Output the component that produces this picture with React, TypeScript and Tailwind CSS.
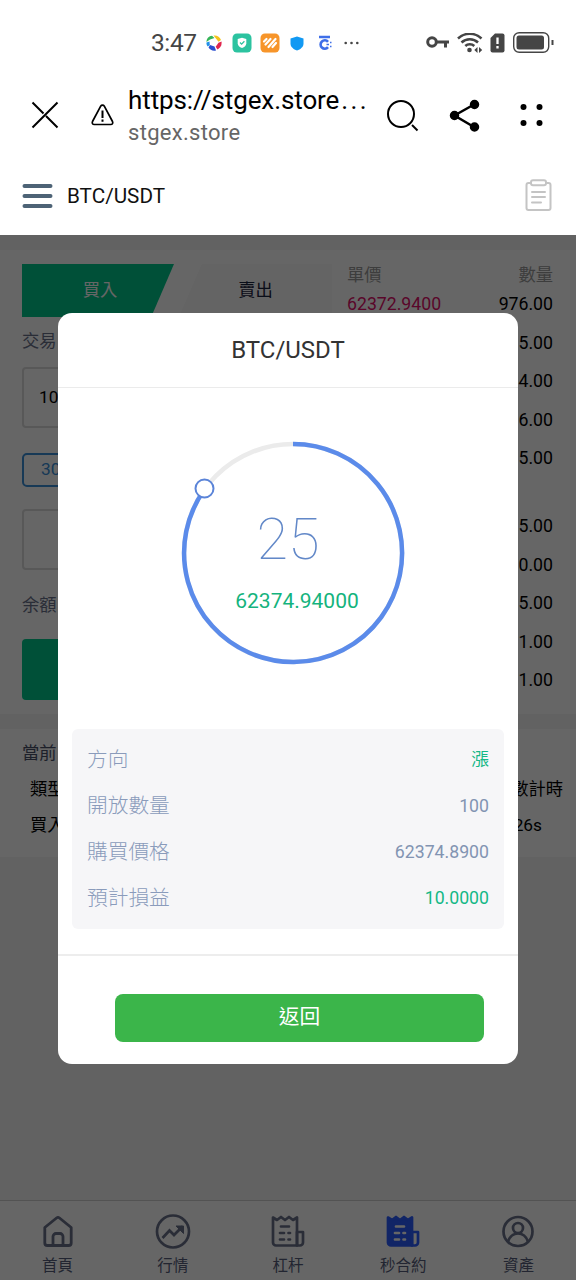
import type { ReactNode } from 'react';

const tradeRows = ['5.00', '4.00', '6.00', '5.00'];
const sellRows = ['5.00', '0.00', '5.00', '1.00', '1.00'];

const details = [
  { label: '方向', value: '漲', up: true },
  { label: '開放數量', value: '100' },
  { label: '購買價格', value: '62374.8900' },
  { label: '預計損益', value: '10.0000', up: true },
];

function StatusBar() {
  return (
    <div className="flex h-[86px] items-center pl-[151px] pr-[22px] text-[#454545]">
      <span className="w-[47px] text-[24.5px] leading-none tracking-[-0.4px]">3:47</span>
      <svg className="ml-[7px]" width="18" height="18" viewBox="0 0 18 18">
        <path d="M1.500 8C1.500 4.500 4 2 7 1.800L9.500 4 5 5.500z" fill="#35b558" />
        <path d="M8.500 1.500c3.500-.5 6.500 1.500 7.500 4.500l-2.500 1.800-3-3.800z" fill="#f6c31c" />
        <path d="M16.500 7.500c.6 3.500-1.200 6.500-4 8l-1.800-2.800 2.800-4z" fill="#e0264f" />
        <path d="M11 16.500c-3.500.8-6-.8-7.500-3L5 11l4.500 1.500z" fill="#2b4fd0" />
        <path d="M2.800 12.500C1.500 11 1.300 9.500 1.500 8.500L4.500 7.500l.3 3.500z" fill="#1f8fe8" />
      </svg>
      <svg className="ml-[9px]" width="20" height="20" viewBox="0 0 20 20">
        <rect x="0.500" y="0.500" width="19" height="19" rx="4.500" fill="#2cc3a0" />
        <path d="M10 4.800l4.300 1.200v4.200c0 2.300-1.800 3.900-4.300 4.800-2.500-.9-4.300-2.500-4.300-4.800V6z" fill="#fff" />
        <path d="M8 9.500l1.600 1.600 2.800-2.800" fill="none" stroke="#2cc3a0" strokeWidth="1.300" />
      </svg>
      <svg className="ml-2" width="20" height="20" viewBox="0 0 20 20" fill="none">
        <rect x="0.500" y="0.500" width="19" height="19" rx="4.500" fill="#f7952a" />
        <path d="M4 8.500l2.500-2.500M5.500 11.500l5-5.500M8.500 14l7-8M12.500 14l3.500-4" stroke="#fff" strokeWidth="2.200" strokeLinecap="round" />
      </svg>
      <svg className="ml-[10px]" width="14" height="15" viewBox="0 0 14 15">
        <path d="M7 .5l6.500 2v5c0 3.500-3 5.800-6.500 7-3.500-1.200-6.500-3.500-6.500-7v-5z" fill="#1299f3" />
      </svg>
      <svg className="ml-[14px]" width="15" height="16" viewBox="0 0 15 16" fill="none" stroke="#3f6fe8">
        <path d="M1 2h11" strokeWidth="2.500" />
        <path d="M10 6.800a4.200 4.200 0 1 0 0 5.400" strokeWidth="2.600" />
        <path d="M8.500 9.500H11M12 7.500h1.500M12 11.500h1.500" strokeWidth="1.500" />
      </svg>
      <svg className="ml-[11px]" width="15" height="4" viewBox="0 0 15 4" fill="currentColor">
        <circle cx="1.700" cy="2" r="1.300" />
        <circle cx="7.500" cy="2" r="1.300" />
        <circle cx="13.300" cy="2" r="1.300" />
      </svg>
      <svg className="ml-auto" width="23" height="14" viewBox="0 0 23 14" fill="none" stroke="currentColor" strokeWidth="3">
        <circle cx="6" cy="6" r="4.300" />
        <path d="M10.500 6H23M19.500 6v5.500" />
      </svg>
      <svg className="ml-2" width="26" height="21" viewBox="0 0 26 21" fill="none" stroke="currentColor" strokeWidth="2.500">
        <path d="M1 5.500c6.500-6.300 17-6.300 23.500 0M4.500 9.500c4.600-4.500 12-4.500 16.500 0M8.300 13c2.500-2.400 6.500-2.400 9 0" />
        <circle cx="12.500" cy="17" r="2.300" fill="currentColor" stroke="none" />
        <path d="M20.500 14v6l-3.200-3zM22 14v6l3.200-3z" fill="currentColor" stroke="none" />
      </svg>
      <svg className="ml-[7px]" width="15" height="20" viewBox="0 0 15 20">
        <path d="M5 .5h7.500a2 2 0 0 1 2 2v15a2 2 0 0 1-2 2h-10a2 2 0 0 1-2-2V5z" fill="currentColor" />
        <path d="M7.500 4.500v6.500M7.500 13v2.500" stroke="#fff" strokeWidth="2.300" />
      </svg>
      <svg className="mb-[2px] ml-2" width="41" height="21" viewBox="0 0 41 21" fill="none" stroke="currentColor">
        <rect x="0.700" y="0.700" width="35" height="19.600" rx="5.500" strokeWidth="1.400" />
        <rect x="3.500" y="3.500" width="27.500" height="14" rx="2.500" fill="currentColor" stroke="none" />
        <path d="M39.500 8v5" strokeWidth="2" />
      </svg>
    </div>
  );
}

function BrowserBar() {
  return (
    <div className="flex h-[72px] items-center pb-[14px] pl-[31px] pr-8 text-black">
      <svg width="28" height="28" viewBox="0 0 28 28" fill="none" stroke="currentColor" strokeWidth="2">
        <path d="M1.500 1.500l11 11M15 15l11.500 11.500M26.500 1.500l-25 25" />
      </svg>
      <svg className="ml-8" width="23" height="22" viewBox="0 0 23 22" fill="none" stroke="currentColor" strokeWidth="1.700">
        <path d="M9.700 2.200L1.500 17.500c-.7 1.500.1 3 1.800 3h16.400c1.700 0 2.500-1.500 1.800-3L13.300 2.200c-.8-1.400-2.800-1.400-3.600 0z" />
        <path d="M11.500 6.500v7.500M11.500 15.500v2.300" strokeWidth="2" />
      </svg>
      <div className="ml-[14px] flex w-[240px] flex-col gap-[5px] whitespace-nowrap">
        <span className="text-[26px] leading-[30px] tracking-[-0.1px]">
          https://stgex.store<span className="ml-[2px] tracking-[2.400px]">...</span>
        </span>
        <span className="text-[22px] leading-[26px] tracking-[0.3px] text-[#666]">stgex.store</span>
      </div>
      <svg className="ml-[18px]" width="33" height="33" viewBox="0 0 33 33" fill="none" stroke="currentColor" strokeWidth="2">
        <circle cx="15" cy="15" r="13" />
        <path d="M26 26l5.500 5.500" />
      </svg>
      <svg className="ml-[30px]" width="31" height="33" viewBox="0 0 31 33" fill="currentColor" stroke="currentColor" strokeWidth="2.500">
        <path d="M25 5.500L5.500 16.500 25 28" fill="none" />
        <circle cx="25.500" cy="5.500" r="3.500" />
        <circle cx="5.500" cy="16.500" r="3.500" />
        <circle cx="25.500" cy="28" r="3.500" />
      </svg>
      <svg className="ml-auto" width="24" height="24" viewBox="0 0 24 24" fill="currentColor">
        <circle cx="3.500" cy="4" r="3" />
        <circle cx="19.500" cy="4" r="3" />
        <circle cx="3.500" cy="20" r="3" />
        <circle cx="19.500" cy="20" r="3" />
      </svg>
    </div>
  );
}

function PageHeader() {
  return (
    <div className="flex h-[77px] items-center justify-between pl-[22px] pr-6">
      <div className="flex items-center gap-[14px]">
        <svg width="31" height="26" viewBox="0 0 31 26" stroke="#4d6376" strokeWidth="4" strokeLinecap="round">
          <path d="M2.500 3h26M2.500 13h26M2.500 23h26" />
        </svg>
        <span className="text-[20.7px] text-[#111]">BTC/USDT</span>
      </div>
      <svg className="mb-1" width="27" height="32" viewBox="0 0 27 32" fill="none" stroke="#c4c4c4" strokeWidth="2">
        <rect x="1.500" y="4" width="24" height="27" rx="2" />
        <rect x="6" y="1.200" width="15" height="5" rx="2" fill="#fff" />
        <path d="M7 13h13M7 18h13M7 23.500h9" strokeLinecap="round" />
      </svg>
    </div>
  );
}

function BookRow({ price, amount }: { price?: string; amount: string }) {
  return (
    <div className="flex h-[38.6px] items-center justify-between text-[17.7px] text-black">
      <span className="text-[#e0106a]">{price}</span>
      <span>{amount}</span>
    </div>
  );
}

function TradePanel() {
  return (
    <section className="flex h-[464px] justify-between bg-white px-[22px] pt-[14px] text-[17.3px]">
      <div className="flex w-[310px] flex-col">
        <div className="flex h-[53px]">
          <div className="flex w-[152px] items-center justify-center bg-[#00c88c] pl-1 text-white [clip-path:polygon(0_0,100%_0,85%_100%,0_100%)]">
            買入
          </div>
          <div className="ml-[5px] flex w-[153px] items-center justify-center bg-[#f9f9f9] text-[#1b2440] [clip-path:polygon(15%_0,100%_0,100%_100%,0_100%)]">
            賣出
          </div>
        </div>
        <div className="flex h-[50px] items-center text-[#69708a]">交易</div>
        <div className="flex h-[61px] items-center rounded border-2 border-[#dcdcdc] pl-[15px]">10</div>
        <div className="mt-[25px] flex h-[34px] w-20 items-center rounded-[5px] border-2 border-[#3a8ed8] pl-[17px] text-[#3a8ed8]">
          30
        </div>
        <div className="mt-[22px] h-[61px] rounded border-2 border-[#dcdcdc]" />
        <div className="flex h-[69px] items-center pt-[3px] text-[#69708a]">余額</div>
        <div className="h-[61px] rounded-sm bg-[#00c88c]" />
      </div>
      <div className="w-[207px] pr-px">
        <div className="flex h-[21px] items-center justify-between pt-[2px] text-[#999]">
          <span>單價</span>
          <span>數量</span>
        </div>
        <BookRow price="62372.9400" amount="976.00" />
        {tradeRows.map((amount, i) => (
          <BookRow key={i} amount={amount} />
        ))}
        <div className="h-[29px]" />
        {sellRows.map((amount, i) => (
          <BookRow key={i} amount={amount} />
        ))}
      </div>
    </section>
  );
}

function OrdersPanel() {
  return (
    <section className="mt-[15px] h-[128px] bg-white px-[22px] pt-[7px] text-[17.3px] text-black">
      <div className="flex h-9 items-center text-[#4a5169]">當前</div>
      <div className="flex h-9 items-center justify-between pl-2">
        <span>類型</span>
        <span className="-mr-[9px]">數計時</span>
      </div>
      <div className="flex h-[35px] items-center justify-between pl-2 pr-3">
        <span>買入</span>
        <span>26s</span>
      </div>
    </section>
  );
}

function Receipt({ active }: { active?: boolean }) {
  const color = active ? '#2b5cff' : '#69708a';
  return (
    <svg width="36" height="36" viewBox="0 0 36 36" fill="none" stroke={color} strokeWidth="2.700" strokeLinejoin="round">
      <path
        d="M3 3.500l4 2.500L11 3l4 3 4-3 4 3 4-2.500v28H6a3 3 0 0 1-3-3z"
        fill={active ? color : 'none'}
      />
      <path d="M27 18h6v10.500a3 3 0 0 1-3 3h-3z" />
      <path
        d="M11 12.500h8M10 19h4M18.500 19h1.500M10 25.500h4M18.500 25.500h1.500"
        stroke={active ? '#fff' : color}
        strokeLinecap="round"
      />
    </svg>
  );
}

function NavItem({ label, children }: { label: string; children: ReactNode }) {
  return (
    <div className="flex flex-1 flex-col items-center gap-px pt-[13px] text-[15.5px] leading-[30px] text-[#565e7c]">
      {children}
      {label}
    </div>
  );
}

function BottomNav() {
  return (
    <nav className="mt-auto flex h-20 border-t border-[#cfcfcf] bg-white [&_svg]:shrink-0">
      <NavItem label="首頁">
        <svg width="36" height="36" viewBox="0 0 36 36" fill="none" stroke="#69708a" strokeWidth="2.800" strokeLinejoin="round">
          <path d="M4.800 13.500L16.500 4a2.500 2.500 0 0 1 3 0l11.700 9.500v15.500a2.500 2.500 0 0 1-2.500 2.500H7.300a2.500 2.500 0 0 1-2.500-2.500z" />
          <path d="M13 31.500V22.500a3 3 0 0 1 3-3h4a3 3 0 0 1 3 3v9" />
        </svg>
      </NavItem>
      <NavItem label="行情">
        <svg width="36" height="36" viewBox="0 0 36 36" fill="none" stroke="#69708a" strokeWidth="2.700">
          <circle cx="18" cy="17.500" r="16" />
          <path d="M7.500 24l7-7.500 4.500 4.500 8.500-8.500" />
          <path d="M21 12h7.500v7.500z" fill="#69708a" strokeWidth="1" />
        </svg>
      </NavItem>
      <NavItem label="杠杆">
        <Receipt />
      </NavItem>
      <NavItem label="秒合約">
        <Receipt active />
      </NavItem>
      <NavItem label="資產">
        <svg width="36" height="36" viewBox="0 0 36 36" fill="none" stroke="#69708a" strokeWidth="2.700">
          <circle cx="18" cy="17.500" r="14.500" />
          <circle cx="18" cy="14" r="5" />
          <path d="M8 27.500c2-5.500 5.500-8 10-8s8 2.500 10 8" />
        </svg>
      </NavItem>
    </nav>
  );
}

function Countdown() {
  return (
    <div className="relative ml-[122px] mt-[52px] h-[226px] w-[226px]">
      <svg width="226" height="226" viewBox="0 0 226 226" fill="none" strokeWidth="4.500">
        <circle cx="113" cy="113" r="109" stroke="#ebebeb" />
        <path d="M113 4A109 109 0 1 1 24.500 49.500" stroke="#5b8bea" />
        <circle cx="24.500" cy="48.500" r="9" fill="#fff" stroke="#5b84d8" strokeWidth="2" />
      </svg>
      <div className="absolute inset-0 flex flex-col items-center pt-[70px]">
        <span className="pr-[10px] text-[57.6px] font-thin leading-[60px] text-[#6288c8]">25</span>
        <span className="mt-4 pl-2 text-[21px] leading-[30px] text-[#14b37d]">62374.94000</span>
      </div>
    </div>
  );
}

function OrderModal() {
  return (
    <div className="flex h-[751px] w-[460px] flex-col rounded-[14px] bg-white">
      <h2 className="flex h-[75px] items-center justify-center border-b border-[#ebebeb] text-[24px] text-[#333]">
        BTC/USDT
      </h2>
      <Countdown />
      <div className="mx-[14px] mt-[63px] h-[200px] rounded-md bg-[#f6f6f8] px-[15px] pt-[8px]">
        {details.map((item) => (
          <div key={item.label} className="flex h-[46px] items-center justify-between">
            <span className="pt-[2px] text-[20.7px] font-light text-[#8a9bbb]">{item.label}</span>
            <span className={item.up ? 'text-[17.700px] text-[#14b886]' : 'text-[17.700px] text-[#8294b2]'}>
              {item.value}
            </span>
          </div>
        ))}
      </div>
      <div className="mt-[25px] border-t-2 border-[#ededed] pl-[57px] pt-[38px]">
        <button className="h-12 w-[369px] rounded-lg bg-[#3bb54a] text-[20.7px] text-white">返回</button>
      </div>
    </div>
  );
}

export default function App() {
  return (
    <div className="flex h-[1280px] w-[576px] flex-col overflow-hidden bg-white font-[Roboto,'Noto_Sans_CJK_TC',sans-serif]">
      <header>
        <StatusBar />
        <BrowserBar />
        <PageHeader />
      </header>
      <main className="relative flex h-[1045px] flex-col bg-[#f5f5f5] pt-[15px]">
        <TradePanel />
        <OrdersPanel />
        <BottomNav />
        <div className="absolute inset-0 flex items-start justify-center bg-black/60 pt-[78px]">
          <OrderModal />
        </div>
      </main>
    </div>
  );
}
